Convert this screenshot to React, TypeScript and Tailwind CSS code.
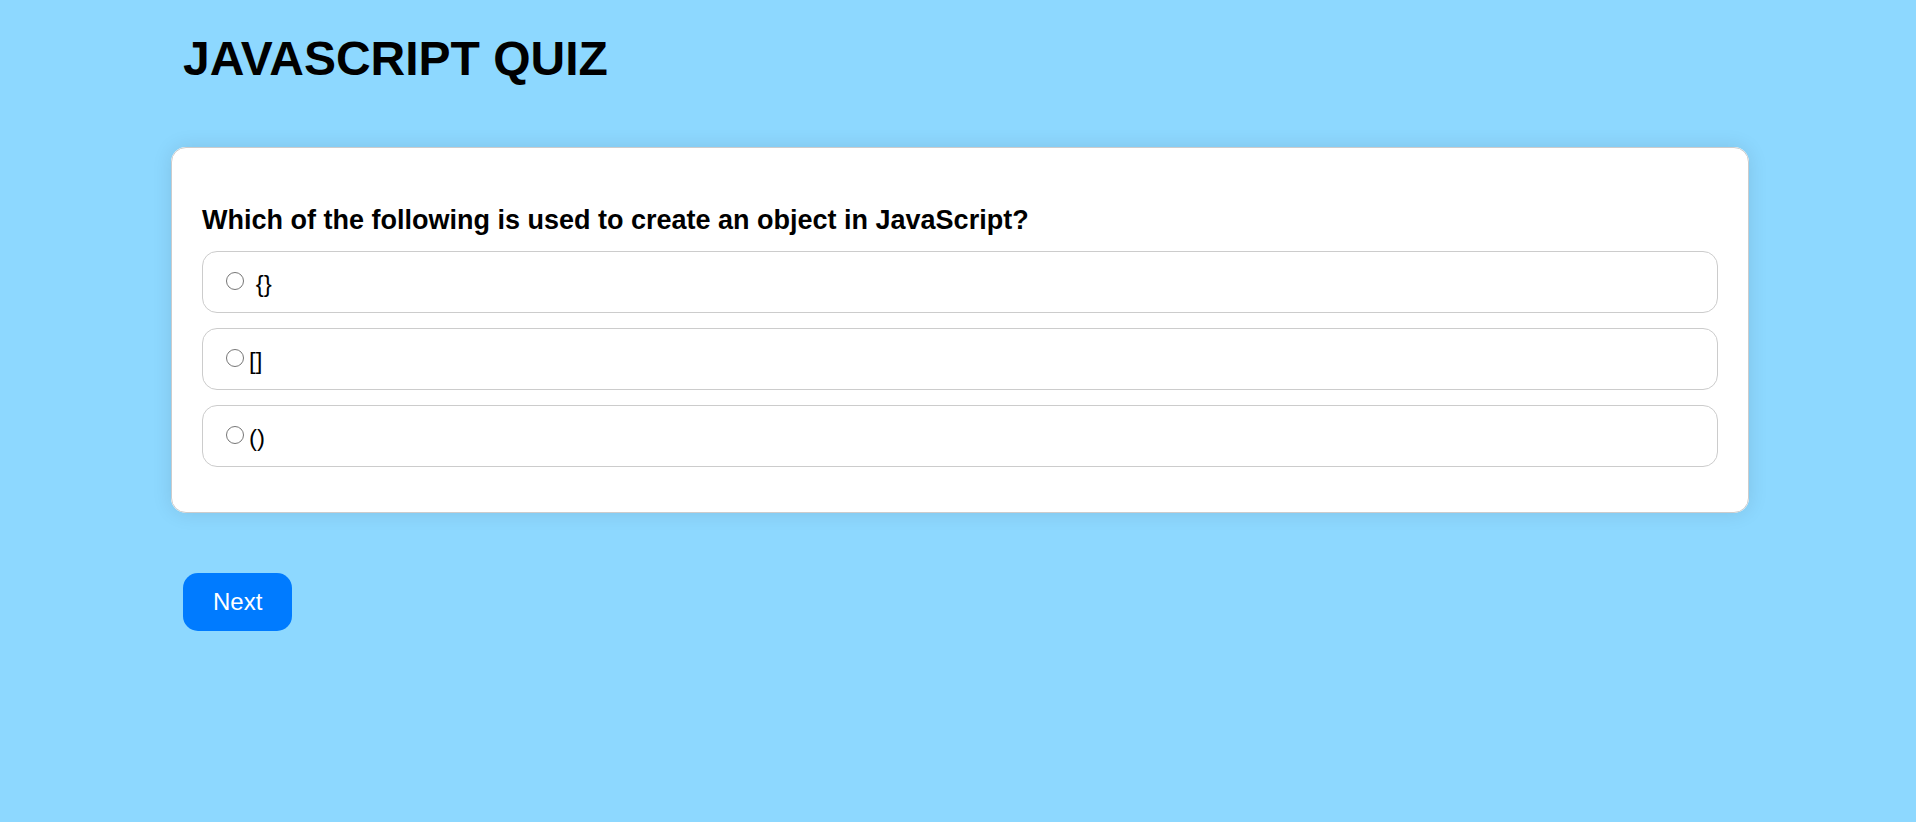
const options = [' {}', '[]', '()'];

export default function App() {
  return (
    <div className="min-h-screen bg-[#8dd8ff] pt-[29px] pr-[167px] pl-[171px] font-['Liberation_Sans',Arial,sans-serif] text-black">
      <h1 className="mx-3 text-5xl leading-[60px] font-bold">JAVASCRIPT QUIZ</h1>
      <form>
        <fieldset className="mt-[58px] rounded-[15px] border border-[#ccc] bg-white px-[30px] pt-14 pb-[45px] shadow-[0_0_20px_rgba(0,0,0,0.1)]">
          <h2 className="text-[27px] leading-8 font-bold">Which of the following is used to create an object in JavaScript?</h2>
          <div className="mt-[15px] flex flex-col gap-[15px]">
            {options.map((option) => (
              <label key={option} className="flex h-[62px] items-center rounded-[15px] border border-[#ccc] pt-1 pl-[23px] text-2xl">
                <input type="radio" name="answer" className="mr-[5px] mb-1.5 size-[18px]" />
                <span className="whitespace-pre">{option}</span>
              </label>
            ))}
          </div>
        </fieldset>
        <button type="button" className="mx-3 mt-[60px] rounded-[15px] bg-[#007bff] px-[30px] py-[15px] text-2xl leading-7 text-white">
          Next
        </button>
      </form>
    </div>
  );
}
